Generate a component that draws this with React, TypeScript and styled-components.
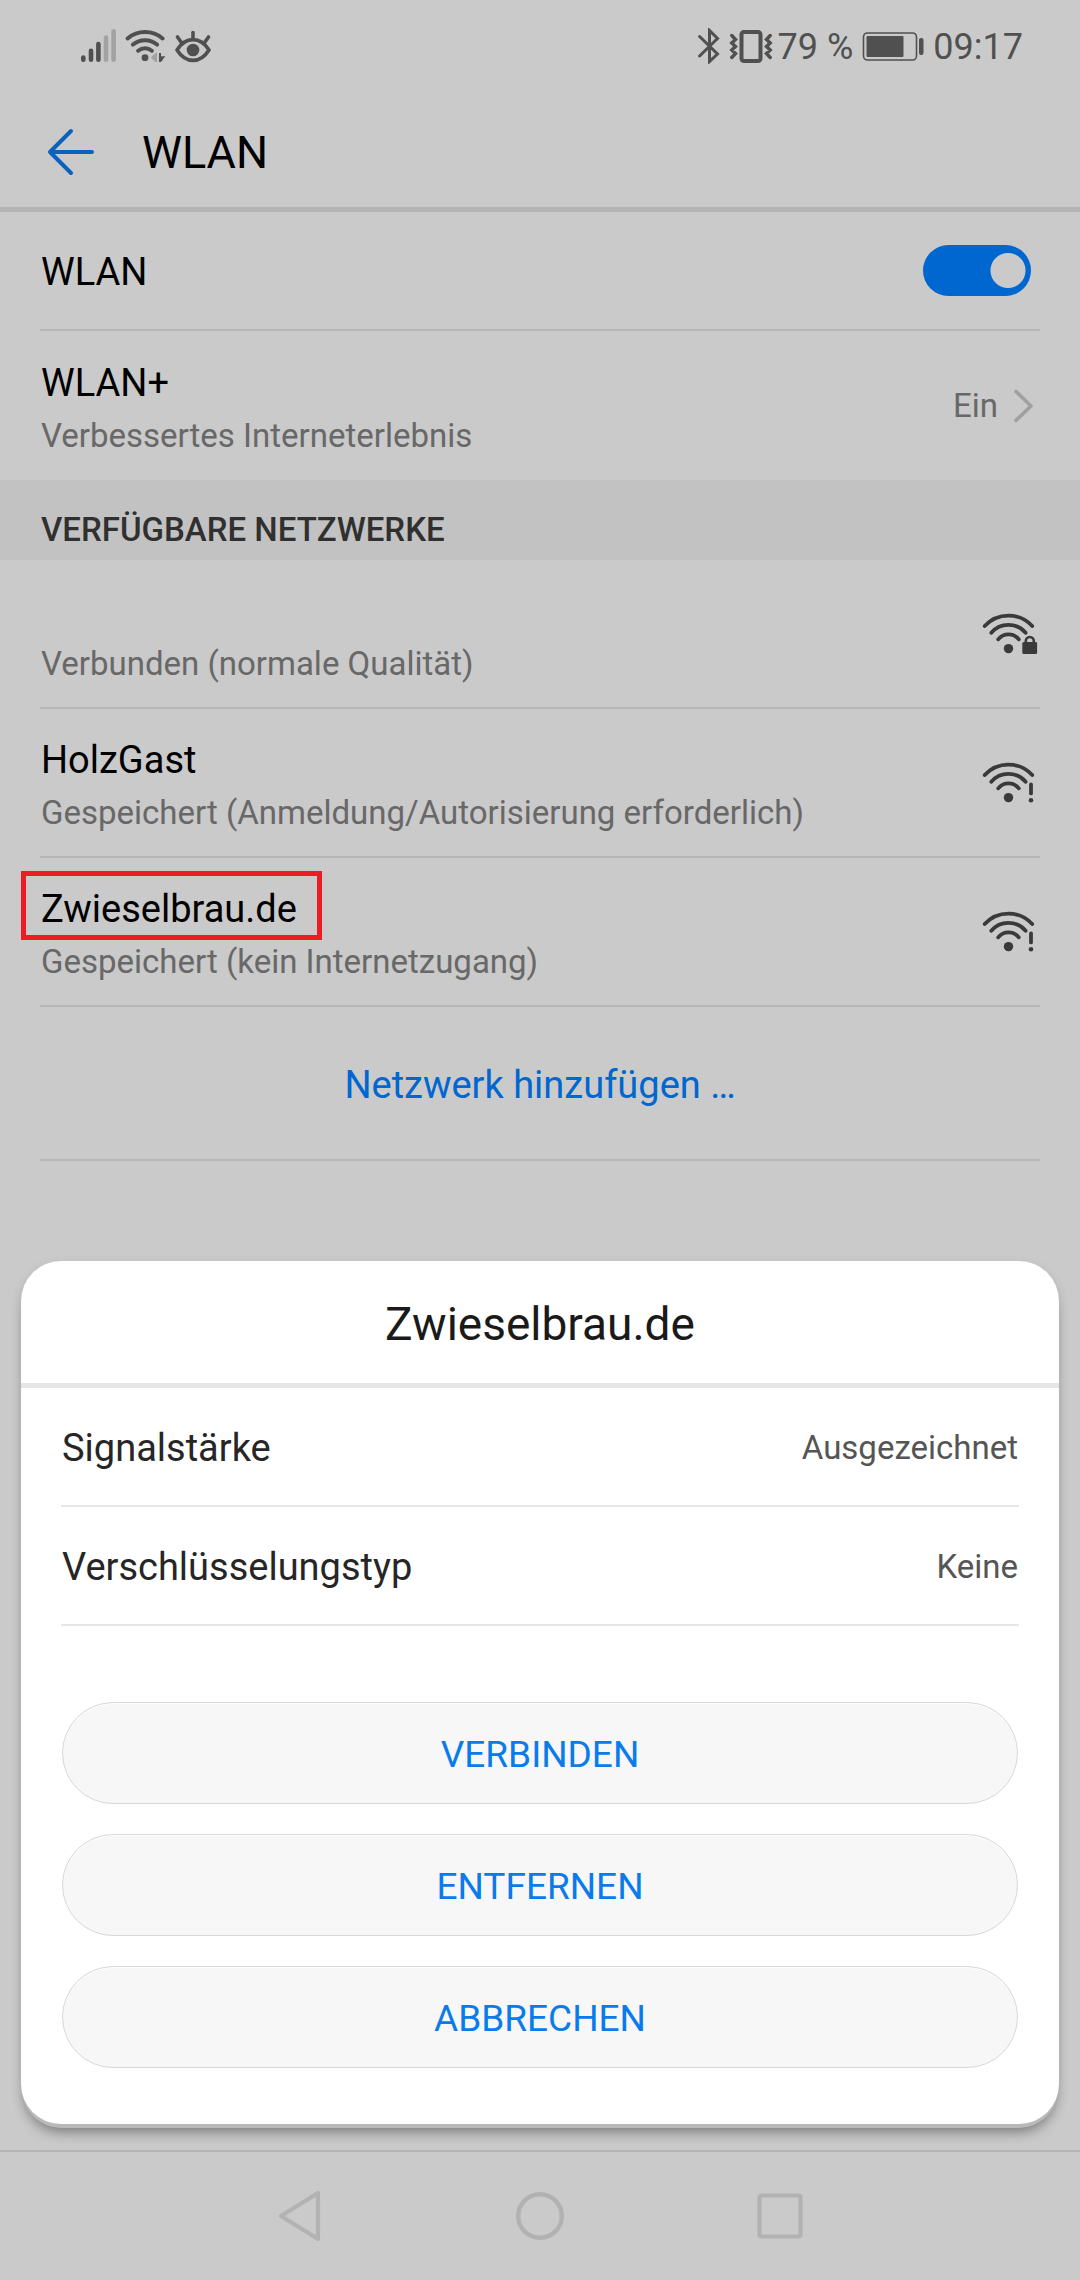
import React from "react";
import styled, { createGlobalStyle } from "styled-components";

const GlobalStyle = createGlobalStyle`
  * { box-sizing: border-box; }
  body {
    margin: 0;
    background: #cacaca;
    color: #000;
    font-family: Roboto, "Liberation Sans", sans-serif;
  }
  button { font: inherit; color: inherit; border: 0; background: none; padding: 0; cursor: pointer; }
  h1, h2, p, ul, dl, dd { margin: 0; padding: 0; font-weight: 400; }
  svg { display: block; flex: none; }
`;

const Screen = styled.div`
  position: relative;
  min-height: 100vh;
  display: flex;
  flex-direction: column;
`;

const StatusBar = styled.header`
  display: flex;
  justify-content: space-between;
  align-items: center;
  height: 92px;
  padding: 0 57px 0 80px;
  color: #505050;
  font-size: 36px;
`;

const StatusGroup = styled.div<{ $gap: number }>`
  display: flex;
  align-items: center;
  gap: ${(p) => p.$gap}px;
`;

const StatusText = styled.span`
  padding-top: 2px;
`;

const AppBar = styled.div`
  display: flex;
  align-items: center;
  gap: 46px;
  height: 120px;
  padding: 4px 46px 0;
  border-bottom: 5px solid #b4b4b4;
`;

const PageTitle = styled.h1`
  && { padding-top: 2px; }
  font-size: 45px;
  line-height: 60px;
`;

const Row = styled.div<{ $height: number; $divider?: boolean }>`
  display: flex;
  align-items: center;
  justify-content: space-between;
  min-height: ${(p) => p.$height}px;
  margin: 0 40px;
  border-bottom: ${(p) => (p.$divider ? "2px solid #b6b6b6" : "0")};
`;

const RowText = styled.div`
  padding: 8px 1px 0;
`;

const Name = styled.div`
  position: relative;
  width: fit-content;
  min-height: 52px;
  font-size: 38px;
  line-height: 52px;
`;

const Detail = styled.div`
  color: #686868;
  font-size: 33px;
  line-height: 54px;
`;

const SwitchLabel = styled.label`
  padding: 2px 1px 0;
  font-size: 38px;
  line-height: 52px;
`;

const Switch = styled.input`
  appearance: none;
  width: 108px;
  height: 51px;
  margin: 0 9px 0 0;
  border-radius: 26px;
  background: #0066d0 radial-gradient(circle at 85px 50%, #cacaca 17px, transparent 18px);
`;

const Setting = styled.button`
  display: flex;
  align-items: center;
  gap: 16px;
  && { padding-right: 7px; color: #686868; font-size: 33px; }
`;

const SectionTitle = styled.h2`
  && { padding: 20px 41px 0; font-weight: 500; }
  background: #c2c2c2;
  color: #303030;
  font-size: 33px;
  line-height: 60px;
`;

const Highlight = styled.span`
  position: absolute;
  inset: -12px -25px -5px -20px;
  border: 5px solid #ed1c24;
`;

const AddNetwork = styled.button`
  && {
    padding-top: 3px;
    color: #0066d0;
    font-size: 38px;
  }
  flex: 1;
  line-height: 52px;
`;

const Sheet = styled.section`
  position: absolute;
  left: 21px;
  right: 21px;
  bottom: 156px;
  padding-bottom: 56px;
  border-radius: 40px;
  background: #fff;
  box-shadow: 0 5px 0 -1px #b9b9b9, 0 14px 14px -6px rgba(0, 0, 0, 0.34), 0 4px 12px rgba(0, 0, 0, 0.12);
`;

const SheetTitle = styled.h2`
  && { padding: 33px 40px 29px; }
  border-bottom: 5px solid #e6e6e6;
  color: #1a1a1a;
  font-size: 46px;
  line-height: 60px;
  text-align: center;
`;

const Facts = styled.dl`
  && { margin: 0 40px; }
`;

const Fact = styled.div`
  display: flex;
  justify-content: space-between;
  align-items: center;
  height: 119px;
  padding: 2px 1px 0;
  border-bottom: 2px solid #e6e6e6;
`;

const FactName = styled.dt`
  color: #262626;
  font-size: 38px;
`;

const FactValue = styled.dd`
  color: #555;
  font-size: 33px;
`;

const Actions = styled.div`
  display: grid;
  gap: 30px;
  margin: 76px 41px 0;
`;

const Action = styled.button`
  && {
    height: 102px;
    padding-top: 3px;
    border: 1px solid #d8d8d8;
    border-radius: 51px;
    background: #f7f7f7;
    box-shadow: inset 0 1px 0 #fff;
    color: #0a7bea;
    font-size: 37px;
  }
`;

const NavBar = styled.nav`
  display: flex;
  justify-content: center;
  align-items: center;
  gap: 192px;
  height: 130px;
  margin-top: auto;
  border-top: 2px solid #b4b4b4;
`;

const NavButton = styled.button`
  display: grid;
  place-items: center;
  width: 48px;
  height: 52px;
`;

type Badge = "lock" | "alert";

function WifiSignal({ badge }: { badge: Badge }) {
  return (
    <svg width="58" height="44" viewBox="0 0 58 44" fill="none" stroke="#3a3a3a" strokeWidth="3.8" strokeLinecap="round" aria-hidden="true">
      <path d="M2.7 14A32.2 32.2 0 0 1 50.2 14M9.3 20.7A22.7 22.7 0 0 1 43.6 20.7M16.2 27.3A13.1 13.1 0 0 1 36.8 27.3" />
      <circle cx="26.5" cy="36.6" r="4.7" fill="#3a3a3a" stroke="none" />
      {badge === "lock" ? (
        <>
          <rect x="40.3" y="30" width="14.8" height="12" rx="1.5" fill="#3a3a3a" stroke="none" />
          <path d="M43.8 31V29a4 4 0 0 1 8 0V31" strokeWidth="2.6" />
        </>
      ) : (
        <>
          <path d="M49 23.4V32.4" />
          <circle cx="49" cy="39.3" r="2.3" fill="#3a3a3a" stroke="none" />
        </>
      )}
    </svg>
  );
}

function SignalIcon() {
  return (
    <svg width="37" height="36" viewBox="80 27 37 36" fill="none" strokeWidth="4.6" strokeLinecap="round" aria-hidden="true">
      <path d="M83.3 56.5V58.7M91 49.8V58.7M98.4 43V58.7" stroke="#505050" />
      <path d="M106 36.5V58.7M113.6 30.4V58.7" stroke="#a2a2a2" />
    </svg>
  );
}

function StatusWifiIcon() {
  return (
    <svg width="41" height="36" viewBox="125 27 41 36" fill="none" stroke="#505050" strokeWidth="4" strokeLinecap="round" aria-hidden="true">
      <path d="M127.6 37.4A27 27 0 0 1 162.6 37.4M133 43.6A18.5 18.5 0 0 1 157 43.6M138.2 49.7A11 11 0 0 1 151.8 49.7" />
      <circle cx="145" cy="56.7" r="3.4" fill="#505050" stroke="none" />
      <path d="M150.8 56.5L155 52.6V60.4ZM155 52H157V61H155Z" fill="#a2a2a2" stroke="none" />
      <path d="M159 52H161V55.3H165.3L161 61H159Z" fill="#505050" stroke="none" />
    </svg>
  );
}

function EyeIcon() {
  return (
    <svg width="37" height="36" viewBox="174 27 37 36" fill="none" stroke="#505050" strokeWidth="3.6" strokeLinecap="round" aria-hidden="true">
      <path d="M177 49Q183.5 38.6 193 38.6T209 49Q202.5 59.4 193 59.4T177 49Z" strokeLinejoin="round" />
      <path d="M193 31.5V38M177.5 36L181.4 41.5M208.5 36L204.6 41.5" />
      <circle cx="193" cy="49" r="6.3" fill="#505050" stroke="none" />
    </svg>
  );
}

function BluetoothIcon() {
  return (
    <svg width="22" height="36" viewBox="697 27 22 36" fill="none" stroke="#505050" strokeWidth="3" strokeLinecap="round" aria-hidden="true">
      <path d="M698.6 35.5L716.5 53L708.5 60.5V29.5L716.5 37.5L698.6 55" />
    </svg>
  );
}

function VibrateIcon() {
  return (
    <svg width="44" height="36" viewBox="729 27 44 36" fill="none" stroke="#505050" strokeLinecap="round" aria-hidden="true">
      <rect x="741.5" y="31" width="19" height="29" rx="2.5" strokeWidth="4" />
      <path d="M731.8 34.5L735.5 38.5L731.8 42L735.5 45.5L731.8 49L735.5 52.5L731.8 56.5M770.2 34.5L766.5 38.5L770.2 42L766.5 45.5L770.2 49L766.5 52.5L770.2 56.5" strokeWidth="3.4" />
    </svg>
  );
}

function BatteryIcon() {
  return (
    <svg width="62" height="36" viewBox="862 27 62 36" aria-hidden="true">
      <rect x="863.5" y="32" width="53" height="27" rx="4" fill="none" stroke="#505050" strokeWidth="1.6" />
      <rect x="866.5" y="35" width="37" height="21" rx="1" fill="#505050" />
      <rect x="919" y="37" width="4.5" height="17" rx="2" fill="#505050" />
    </svg>
  );
}

const networks: { name: string; detail: string; badge: Badge; marked?: boolean }[] = [
  { name: "", detail: "Verbunden (normale Qualität)", badge: "lock" },
  { name: "HolzGast", detail: "Gespeichert (Anmeldung/Autorisierung erforderlich)", badge: "alert" },
  { name: "Zwieselbrau.de", detail: "Gespeichert (kein Internetzugang)", badge: "alert", marked: true },
];

const facts = [
  ["Signalstärke", "Ausgezeichnet"],
  ["Verschlüsselungstyp", "Keine"],
];

const actions = ["VERBINDEN", "ENTFERNEN", "ABBRECHEN"];

export default function App() {
  return (
    <Screen>
      <GlobalStyle />
      <StatusBar>
        <StatusGroup $gap={8}>
          <SignalIcon />
          <StatusWifiIcon />
          <EyeIcon />
        </StatusGroup>
        <StatusGroup $gap={9}>
          <BluetoothIcon />
          <StatusGroup $gap={5}>
            <VibrateIcon />
            <StatusText>79 %</StatusText>
          </StatusGroup>
          <BatteryIcon />
          <StatusText>09:17</StatusText>
        </StatusGroup>
      </StatusBar>

      <AppBar>
        <button aria-label="Zurück">
          <svg width="50" height="50" viewBox="0 0 50 50" fill="none" stroke="#0a62bd" strokeWidth="4" strokeLinecap="round" strokeLinejoin="round">
            <path d="M46 25H4M25 4L4 25L25 46" />
          </svg>
        </button>
        <PageTitle>WLAN</PageTitle>
      </AppBar>

      <main>
        <Row $height={119} $divider>
          <SwitchLabel htmlFor="wlan">WLAN</SwitchLabel>
          <Switch id="wlan" type="checkbox" role="switch" defaultChecked />
        </Row>
        <Row $height={149}>
          <RowText>
            <Name>WLAN+</Name>
            <Detail>Verbessertes Interneterlebnis</Detail>
          </RowText>
          <Setting>
            Ein
            <svg width="19" height="34" viewBox="0 0 19 34" fill="none" stroke="#a0a0a0" strokeWidth="3.6" strokeLinecap="round" strokeLinejoin="round">
              <path d="M2 2.5L17 17L2 31.5" />
            </svg>
          </Setting>
        </Row>
        <SectionTitle>VERFÜGBARE NETZWERKE</SectionTitle>
        {networks.map((n) => (
          <Row key={n.detail} $height={149} $divider>
            <RowText>
              <Name>
                {n.name}
                {n.marked && <Highlight />}
              </Name>
              <Detail>{n.detail}</Detail>
            </RowText>
            <WifiSignal badge={n.badge} />
          </Row>
        ))}
        <Row $height={154} $divider>
          <AddNetwork>Netzwerk hinzufügen …</AddNetwork>
        </Row>
      </main>

      <NavBar>
        <NavButton aria-label="Zurück">
          <svg width="44" height="52" viewBox="0 0 44 52" fill="none" stroke="#b2b2b2" strokeWidth="4.2" strokeLinejoin="round">
            <path d="M3 26L40 3V49Z" />
          </svg>
        </NavButton>
        <NavButton aria-label="Startseite">
          <svg width="48" height="48" viewBox="0 0 48 48" fill="none" stroke="#b2b2b2" strokeWidth="4.4">
            <circle cx="24" cy="24" r="21.8" />
          </svg>
        </NavButton>
        <NavButton aria-label="Letzte Apps">
          <svg width="46" height="46" viewBox="0 0 46 46" fill="none" stroke="#b2b2b2" strokeWidth="4.2">
            <rect x="2.5" y="2.5" width="41" height="41" rx="1.5" />
          </svg>
        </NavButton>
      </NavBar>

      <Sheet role="dialog" aria-labelledby="sheet-title">
        <SheetTitle id="sheet-title">Zwieselbrau.de</SheetTitle>
        <Facts>
          {facts.map(([name, value]) => (
            <Fact key={name}>
              <FactName>{name}</FactName>
              <FactValue>{value}</FactValue>
            </Fact>
          ))}
        </Facts>
        <Actions>
          {actions.map((a) => (
            <Action key={a}>{a}</Action>
          ))}
        </Actions>
      </Sheet>
    </Screen>
  );
}
